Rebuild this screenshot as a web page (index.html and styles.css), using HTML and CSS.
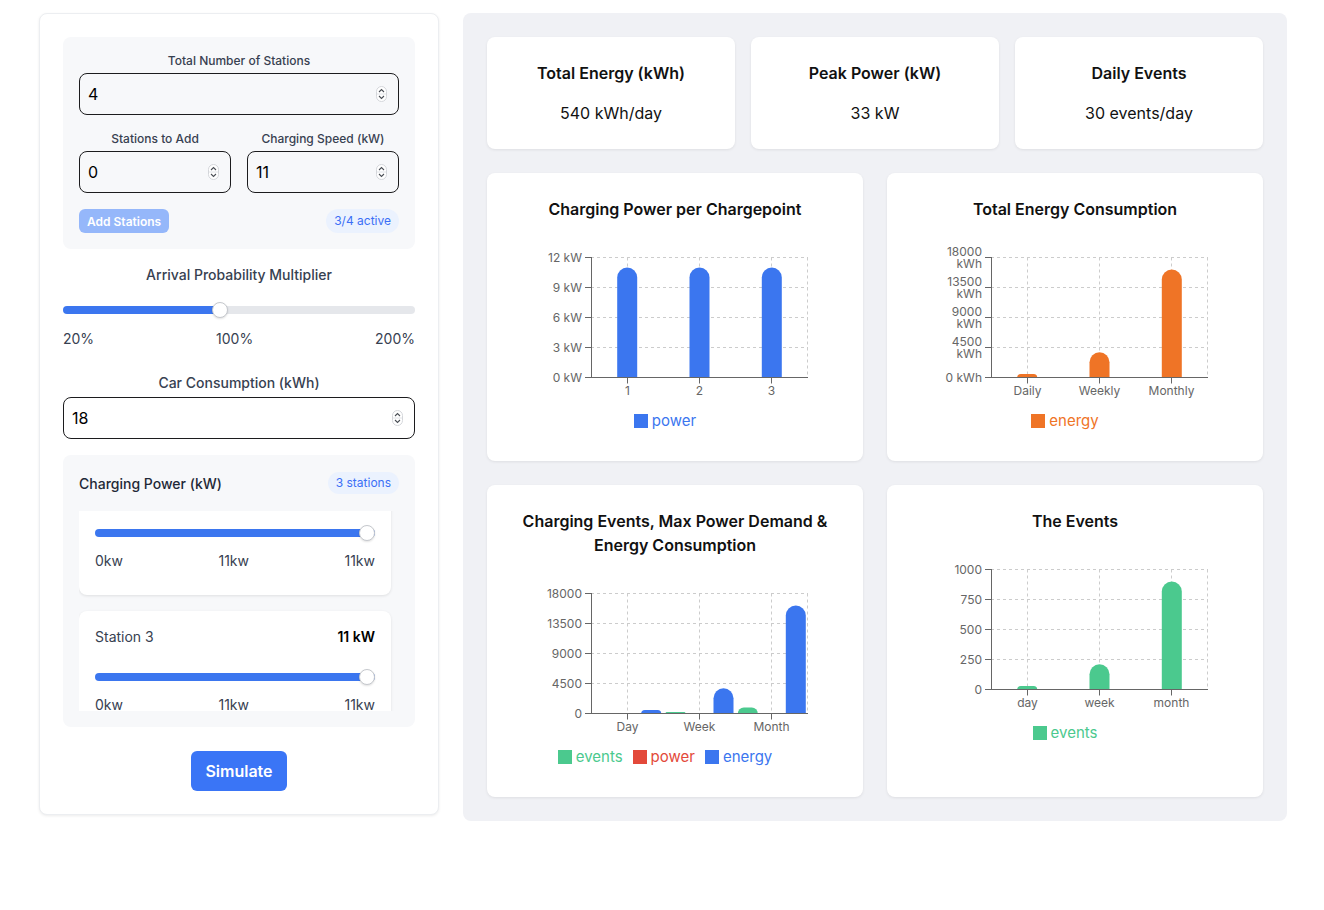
FILE: index.html
```html
<!DOCTYPE html>
<html lang="en">
<head>
<meta charset="utf-8">
<title>Charging Simulation</title>
<link rel="stylesheet" href="styles.css">
</head>
<body>
<div class="page">
  <aside class="controls">
    <section class="box">
      <div class="field">
        <label class="lbl-sm" for="total">Total Number of Stations</label>
        <div class="num">
          <input id="total" type="number" value="4">
          <svg class="spin" viewBox="0 0 11 16" width="11" height="16"><rect x="0.5" y="0.5" width="10" height="15" rx="5" fill="#fff" stroke="#d4d6da"/><line x1="1" y1="8" x2="10" y2="8" stroke="#e2e4e8"/><polyline points="3,6 5.5,3.6 8,6" fill="none" stroke="#4b4f56" stroke-width="1.1"/><polyline points="3,10 5.5,12.4 8,10" fill="none" stroke="#4b4f56" stroke-width="1.1"/></svg>
        </div>
      </div>
      <div class="pair">
        <div class="field">
          <label class="lbl-sm" for="add">Stations to Add</label>
          <div class="num">
            <input id="add" type="number" value="0">
            <svg class="spin" viewBox="0 0 11 16" width="11" height="16"><rect x="0.5" y="0.5" width="10" height="15" rx="5" fill="#fff" stroke="#d4d6da"/><line x1="1" y1="8" x2="10" y2="8" stroke="#e2e4e8"/><polyline points="3,6 5.5,3.6 8,6" fill="none" stroke="#4b4f56" stroke-width="1.1"/><polyline points="3,10 5.5,12.4 8,10" fill="none" stroke="#4b4f56" stroke-width="1.1"/></svg>
          </div>
        </div>
        <div class="field">
          <label class="lbl-sm" for="speed">Charging Speed (kW)</label>
          <div class="num">
            <input id="speed" type="number" value="11">
            <svg class="spin" viewBox="0 0 11 16" width="11" height="16"><rect x="0.5" y="0.5" width="10" height="15" rx="5" fill="#fff" stroke="#d4d6da"/><line x1="1" y1="8" x2="10" y2="8" stroke="#e2e4e8"/><polyline points="3,6 5.5,3.6 8,6" fill="none" stroke="#4b4f56" stroke-width="1.1"/><polyline points="3,10 5.5,12.4 8,10" fill="none" stroke="#4b4f56" stroke-width="1.1"/></svg>
          </div>
        </div>
      </div>
      <div class="actions">
        <button class="btn-add" disabled>Add Stations</button>
        <span class="pill">3/4 active</span>
      </div>
    </section>

    <section class="arrival">
      <div class="lbl">Arrival Probability Multiplier</div>
      <input class="range" type="range" min="20" max="200" value="100" style="--pct:44.7%">
      <div class="scale"><span>20%</span><span>100%</span><span>200%</span></div>
    </section>

    <section class="car">
      <div class="lbl">Car Consumption (kWh)</div>
      <div class="num">
        <input type="number" value="18">
        <svg class="spin" viewBox="0 0 11 16" width="11" height="16"><rect x="0.5" y="0.5" width="10" height="15" rx="5" fill="#fff" stroke="#d4d6da"/><line x1="1" y1="8" x2="10" y2="8" stroke="#e2e4e8"/><polyline points="3,6 5.5,3.6 8,6" fill="none" stroke="#4b4f56" stroke-width="1.1"/><polyline points="3,10 5.5,12.4 8,10" fill="none" stroke="#4b4f56" stroke-width="1.1"/></svg>
      </div>
    </section>

    <section class="box power">
      <div class="power-head">
        <span class="power-title">Charging Power (kW)</span>
        <span class="pill pill-sm">3 stations</span>
      </div>
      <div class="stations" id="stationList">
        <div class="station">
          <div class="station-head"><span>Station 1</span><b>11 kW</b></div>
          <input class="range" type="range" min="0" max="11" value="11" style="--pct:100%">
          <div class="scale"><span>0kw</span><span>11kw</span><span>11kw</span></div>
        </div>
        <div class="station">
          <div class="station-head"><span>Station 2</span><b>11 kW</b></div>
          <input class="range" type="range" min="0" max="11" value="11" style="--pct:100%">
          <div class="scale"><span>0kw</span><span>11kw</span><span>11kw</span></div>
        </div>
        <div class="station">
          <div class="station-head"><span>Station 3</span><b>11 kW</b></div>
          <input class="range" type="range" min="0" max="11" value="11" style="--pct:100%">
          <div class="scale"><span>0kw</span><span>11kw</span><span>11kw</span></div>
        </div>
      </div>
    </section>

    <div class="sim-wrap"><button class="btn-sim">Simulate</button></div>
  </aside>

  <main class="dash">
    <div class="stats">
      <div class="stat"><h3>Total Energy (kWh)</h3><p>540 kWh/day</p></div>
      <div class="stat"><h3>Peak Power (kW)</h3><p>33 kW</p></div>
      <div class="stat"><h3>Daily Events</h3><p>30 events/day</p></div>
    </div>

    <div class="charts">
      <!-- Chart 1 -->
      <div class="chart">
        <h3>Charging Power per Chargepoint</h3>
        <svg viewBox="0 0 328 172" width="328" height="172">
          <g class="grid">
            <line x1="80" y1="24.5" x2="297" y2="24.5"/><line x1="80" y1="54.5" x2="297" y2="54.5"/><line x1="80" y1="84.5" x2="297" y2="84.5"/><line x1="80" y1="114.5" x2="297" y2="114.5"/>
            <line x1="116.5" y1="24.5" x2="116.5" y2="144.5"/><line x1="188.5" y1="24.5" x2="188.5" y2="144.5"/><line x1="260.5" y1="24.5" x2="260.5" y2="144.5"/><line x1="296.5" y1="24.5" x2="296.5" y2="144.5"/>
          </g>
          <g fill="#3b76ef">
            <path d="M106.2 144.5V44.5A10 10 0 0 1 126.2 44.5V144.5Z"/>
            <path d="M178.5 144.5V44.5A10 10 0 0 1 198.5 44.5V144.5Z"/>
            <path d="M250.8 144.5V44.5A10 10 0 0 1 270.8 44.5V144.5Z"/>
          </g>
          <g class="axis">
            <line x1="80.5" y1="24" x2="80.5" y2="145"/><line x1="80" y1="144.5" x2="297" y2="144.5"/>
            <line x1="74" y1="24.5" x2="80" y2="24.5"/><line x1="74" y1="54.5" x2="80" y2="54.5"/><line x1="74" y1="84.5" x2="80" y2="84.5"/><line x1="74" y1="114.5" x2="80" y2="114.5"/><line x1="74" y1="144.5" x2="80" y2="144.5"/>
            <line x1="116.5" y1="144.5" x2="116.5" y2="150.5"/><line x1="188.5" y1="144.5" x2="188.5" y2="150.5"/><line x1="260.5" y1="144.5" x2="260.5" y2="150.5"/>
          </g>
          <g class="yt">
            <text x="71" y="28.5">12 kW</text><text x="71" y="58.5">9 kW</text><text x="71" y="88.5">6 kW</text><text x="71" y="118.5">3 kW</text><text x="71" y="148.5">0 kW</text>
          </g>
          <g class="xt">
            <text x="116.5" y="162">1</text><text x="188.5" y="162">2</text><text x="260.5" y="162">3</text>
          </g>
        </svg>
        <div class="legend"><span class="c-blue"><i></i>power</span></div>
      </div>

      <!-- Chart 2 -->
      <div class="chart">
        <h3>Total Energy Consumption</h3>
        <svg viewBox="0 0 328 172" width="328" height="172">
          <g class="grid">
            <line x1="80" y1="24.5" x2="297" y2="24.5"/><line x1="80" y1="54.5" x2="297" y2="54.5"/><line x1="80" y1="84.5" x2="297" y2="84.5"/><line x1="80" y1="114.5" x2="297" y2="114.5"/>
            <line x1="116.5" y1="24.5" x2="116.5" y2="144.5"/><line x1="188.5" y1="24.5" x2="188.5" y2="144.5"/><line x1="260.5" y1="24.5" x2="260.5" y2="144.5"/><line x1="296.5" y1="24.5" x2="296.5" y2="144.5"/>
          </g>
          <g fill="#ef7426">
            <path d="M106.2 144.5A3.6 3.6 0 0 1 109.8 140.9H122.6A3.6 3.6 0 0 1 126.2 144.5Z"/>
            <path d="M178.5 144.5V129.3A10 10 0 0 1 198.5 129.3V144.5Z"/>
            <path d="M250.8 144.5V46.5A10 10 0 0 1 270.8 46.5V144.5Z"/>
          </g>
          <g class="axis">
            <line x1="80.5" y1="24" x2="80.5" y2="145"/><line x1="80" y1="144.5" x2="297" y2="144.5"/>
            <line x1="74" y1="24.5" x2="80" y2="24.5"/><line x1="74" y1="54.5" x2="80" y2="54.5"/><line x1="74" y1="84.5" x2="80" y2="84.5"/><line x1="74" y1="114.5" x2="80" y2="114.5"/><line x1="74" y1="144.5" x2="80" y2="144.5"/>
            <line x1="116.5" y1="144.5" x2="116.5" y2="150.5"/><line x1="188.5" y1="144.5" x2="188.5" y2="150.5"/><line x1="260.5" y1="144.5" x2="260.5" y2="150.5"/>
          </g>
          <g class="yt">
            <text x="71" y="22.5">18000</text><text x="71" y="34.5">kWh</text>
            <text x="71" y="52.5">13500</text><text x="71" y="64.5">kWh</text>
            <text x="71" y="82.5">9000</text><text x="71" y="94.5">kWh</text>
            <text x="71" y="112.5">4500</text><text x="71" y="124.5">kWh</text>
            <text x="71" y="148.5">0 kWh</text>
          </g>
          <g class="xt">
            <text x="116.5" y="162">Daily</text><text x="188.5" y="162">Weekly</text><text x="260.5" y="162">Monthly</text>
          </g>
        </svg>
        <div class="legend"><span class="c-orange"><i></i>energy</span></div>
      </div>

      <!-- Chart 3 -->
      <div class="chart">
        <h3>Charging Events, Max Power Demand &amp; Energy Consumption</h3>
        <svg viewBox="0 0 328 172" width="328" height="172">
          <g class="grid">
            <line x1="80" y1="24.5" x2="297" y2="24.5"/><line x1="80" y1="54.5" x2="297" y2="54.5"/><line x1="80" y1="84.5" x2="297" y2="84.5"/><line x1="80" y1="114.5" x2="297" y2="114.5"/>
            <line x1="116.5" y1="24.5" x2="116.5" y2="144.5"/><line x1="188.5" y1="24.5" x2="188.5" y2="144.5"/><line x1="260.5" y1="24.5" x2="260.5" y2="144.5"/><line x1="296.5" y1="24.5" x2="296.5" y2="144.5"/>
          </g>
          <g fill="#4bc98e">
            <rect x="82.2" y="144.2" width="20" height="0.3"/>
            <path d="M154.5 144.5V144.5A1.4 1.4 0 0 1 155.9 143.1H173.1A1.4 1.4 0 0 1 174.5 144.5Z"/>
            <path d="M226.8 144.5A6 6 0 0 1 232.8 138.5H240.8A6 6 0 0 1 246.8 144.5Z"/>
          </g>
          <g fill="#e3493a">
            <rect x="106.2" y="144.2" width="20" height="0.3"/>
            <rect x="178.5" y="144.2" width="20" height="0.3"/>
            <rect x="250.8" y="144.2" width="20" height="0.3"/>
          </g>
          <g fill="#3b76ef">
            <path d="M130.2 144.5A3.6 3.6 0 0 1 133.8 140.9H146.6A3.6 3.6 0 0 1 150.2 144.5Z"/>
            <path d="M202.5 144.5V129.3A10 10 0 0 1 222.5 129.3V144.5Z"/>
            <path d="M274.8 144.5V46.5A10 10 0 0 1 294.8 46.5V144.5Z"/>
          </g>
          <g class="axis">
            <line x1="80.5" y1="24" x2="80.5" y2="145"/><line x1="80" y1="144.5" x2="297" y2="144.5"/>
            <line x1="74" y1="24.5" x2="80" y2="24.5"/><line x1="74" y1="54.5" x2="80" y2="54.5"/><line x1="74" y1="84.5" x2="80" y2="84.5"/><line x1="74" y1="114.5" x2="80" y2="114.5"/><line x1="74" y1="144.5" x2="80" y2="144.5"/>
            <line x1="116.5" y1="144.5" x2="116.5" y2="150.5"/><line x1="188.5" y1="144.5" x2="188.5" y2="150.5"/><line x1="260.5" y1="144.5" x2="260.5" y2="150.5"/>
          </g>
          <g class="yt">
            <text x="71" y="28.5">18000</text><text x="71" y="58.5">13500</text><text x="71" y="88.5">9000</text><text x="71" y="118.5">4500</text><text x="71" y="148.5">0</text>
          </g>
          <g class="xt">
            <text x="116.5" y="162">Day</text><text x="188.5" y="162">Week</text><text x="260.5" y="162">Month</text>
          </g>
        </svg>
        <div class="legend"><span class="c-green"><i></i>events</span><span class="c-red"><i></i>power</span><span class="c-blue"><i></i>energy</span></div>
      </div>

      <!-- Chart 4 -->
      <div class="chart">
        <h3>The Events</h3>
        <svg viewBox="0 0 328 172" width="328" height="172">
          <g class="grid">
            <line x1="80" y1="24.5" x2="297" y2="24.5"/><line x1="80" y1="54.5" x2="297" y2="54.5"/><line x1="80" y1="84.5" x2="297" y2="84.5"/><line x1="80" y1="114.5" x2="297" y2="114.5"/>
            <line x1="116.5" y1="24.5" x2="116.5" y2="144.5"/><line x1="188.5" y1="24.5" x2="188.5" y2="144.5"/><line x1="260.5" y1="24.5" x2="260.5" y2="144.5"/><line x1="296.5" y1="24.5" x2="296.5" y2="144.5"/>
          </g>
          <g fill="#4bc98e">
            <path d="M106.2 144.5A3.6 3.6 0 0 1 109.8 140.9H122.6A3.6 3.6 0 0 1 126.2 144.5Z"/>
            <path d="M178.5 144.5V129.3A10 10 0 0 1 198.5 129.3V144.5Z"/>
            <path d="M250.8 144.5V46.5A10 10 0 0 1 270.8 46.5V144.5Z"/>
          </g>
          <g class="axis">
            <line x1="80.5" y1="24" x2="80.5" y2="145"/><line x1="80" y1="144.5" x2="297" y2="144.5"/>
            <line x1="74" y1="24.5" x2="80" y2="24.5"/><line x1="74" y1="54.5" x2="80" y2="54.5"/><line x1="74" y1="84.5" x2="80" y2="84.5"/><line x1="74" y1="114.5" x2="80" y2="114.5"/><line x1="74" y1="144.5" x2="80" y2="144.5"/>
            <line x1="116.5" y1="144.5" x2="116.5" y2="150.5"/><line x1="188.5" y1="144.5" x2="188.5" y2="150.5"/><line x1="260.5" y1="144.5" x2="260.5" y2="150.5"/>
          </g>
          <g class="yt">
            <text x="71" y="28.5">1000</text><text x="71" y="58.5">750</text><text x="71" y="88.5">500</text><text x="71" y="118.5">250</text><text x="71" y="148.5">0</text>
          </g>
          <g class="xt">
            <text x="116.5" y="162">day</text><text x="188.5" y="162">week</text><text x="260.5" y="162">month</text>
          </g>
        </svg>
        <div class="legend"><span class="c-green"><i></i>events</span></div>
      </div>
    </div>
  </main>
</div>
<script src="app.js"></script>
</body>
</html>
```

FILE: styles.css
```css
* { box-sizing: border-box; }

body {
  margin: 0;
  font-family: Inter, "Noto Sans", "Liberation Sans", sans-serif;
  color: #111;
  background: #fff;
}

.page {
  display: flex;
  align-items: flex-start;
  gap: 24px;
  padding: 13px 0 0 39px;
}

/* ---------- Left control panel ---------- */
.controls {
  width: 400px;
  flex: none;
  padding: 23px;
  background: #fff;
  border: 1px solid #eceef1;
  border-radius: 8px;
  box-shadow: 0 1px 3px rgba(0, 0, 0, 0.08);
}

.box {
  background: #f7f8fa;
  border-radius: 8px;
  padding: 16px;
  display: flex;
  flex-direction: column;
  gap: 16px;
}

.field {
  display: flex;
  flex-direction: column;
  gap: 4px;
  min-width: 0;
}

.lbl-sm {
  font-size: 12px;
  line-height: 16px;
  font-weight: 500;
  color: #374151;
  text-align: center;
}

.lbl {
  font-size: 14px;
  line-height: 20px;
  font-weight: 500;
  color: #374151;
  text-align: center;
}

.num {
  display: flex;
  align-items: center;
  height: 42px;
  min-width: 0;
  border: 1px solid #1c1c1e;
  border-radius: 8px;
  padding: 0 11px 0 8px;
}

.num input {
  flex: 1 1 0;
  width: 0;
  min-width: 0;
  border: 0;
  padding: 0;
  background: transparent;
  font-family: Inter, "Noto Sans", sans-serif;
  font-size: 16px;
  color: #000;
  outline: none;
  -moz-appearance: textfield;
}

.num input::-webkit-inner-spin-button,
.num input::-webkit-outer-spin-button {
  -webkit-appearance: none;
  margin: 0;
}

.spin { flex: none; display: block; }

.pair {
  display: grid;
  grid-template-columns: minmax(0, 1fr) minmax(0, 1fr);
  gap: 16px;
}

.actions {
  display: flex;
  justify-content: space-between;
  align-items: center;
}

.btn-add {
  height: 24px;
  padding: 0 8px;
  border: 0;
  border-radius: 6px;
  background: #95b7fa;
  color: #fff;
  font-family: Inter, "Noto Sans", sans-serif;
  font-size: 12px;
  font-weight: 600;
}

.pill {
  font-size: 12px;
  line-height: 16px;
  padding: 4px 8px;
  border-radius: 999px;
  background: #ebf2fe;
  color: #3b6ff6;
}

.pill-sm { padding: 3px 8px; }

.arrival { margin-top: 16px; }

.range {
  display: block;
  width: 100%;
  height: 16px;
  margin: 17px 0 0;
  padding: 0;
  -webkit-appearance: none;
  appearance: none;
  background: transparent;
}

.range::-webkit-slider-runnable-track {
  height: 8px;
  border-radius: 4px;
  background: linear-gradient(to right, #3b76ef var(--pct), #e5e7eb var(--pct));
}

.range::-webkit-slider-thumb {
  -webkit-appearance: none;
  width: 16px;
  height: 16px;
  margin-top: -4px;
  border-radius: 50%;
  background: #fff;
  border: 1px solid #c5c8cd;
  box-shadow: 0 1px 2px rgba(0, 0, 0, 0.12);
}

.scale {
  display: flex;
  justify-content: space-between;
  margin-top: 11px;
  font-size: 14px;
  line-height: 20px;
  color: #374151;
}

.car { margin-top: 24px; }
.car .num { margin-top: 4px; }

.power { margin-top: 16px; }

.power-head {
  display: flex;
  justify-content: space-between;
  align-items: center;
  height: 24px;
}

.power-title {
  font-size: 14px;
  font-weight: 500;
  color: #1f2937;
}

.stations {
  height: 200px;
  overflow-y: auto;
  padding-right: 8px;
  display: flex;
  flex-direction: column;
  gap: 16px;
  scrollbar-width: none;
}

.stations::-webkit-scrollbar { width: 0; height: 0; }

.station {
  flex-shrink: 0;
  background: #fff;
  border-radius: 8px;
  box-shadow: 0 1px 3px rgba(0, 0, 0, 0.1);
  padding: 16px 16px 24px;
}

.station-head {
  display: flex;
  justify-content: space-between;
  font-size: 14px;
  line-height: 20px;
  color: #374151;
}

.station-head b { color: #000; font-weight: 600; }

.station .range { margin-top: 22px; }
.station .scale { margin-top: 10px; }

.sim-wrap {
  display: flex;
  justify-content: center;
  margin-top: 24px;
}

.btn-sim {
  width: 96px;
  height: 40px;
  border: 0;
  border-radius: 6px;
  background: #3a75f6;
  color: #fff;
  font-family: Inter, "Noto Sans", sans-serif;
  font-size: 16px;
  font-weight: 600;
}

/* ---------- Dashboard ---------- */
.dash {
  width: 824px;
  flex: none;
  padding: 24px;
  background: #f0f1f5;
  border-radius: 8px;
}

.stats {
  display: grid;
  grid-template-columns: repeat(3, 1fr);
  gap: 16px;
}

.stat {
  background: #fff;
  border-radius: 8px;
  box-shadow: 0 1px 3px rgba(0, 0, 0, 0.08);
  padding: 24px;
  text-align: center;
  display: flex;
  flex-direction: column;
  gap: 16px;
}

.stat h3 {
  margin: 0;
  font-size: 16px;
  line-height: 24px;
  font-weight: 600;
}

.stat p {
  margin: 0;
  font-size: 16px;
  line-height: 24px;
}

.charts {
  display: grid;
  grid-template-columns: 1fr 1fr;
  gap: 24px;
  margin-top: 24px;
}

.chart {
  background: #fff;
  border-radius: 8px;
  box-shadow: 0 1px 3px rgba(0, 0, 0, 0.08);
  padding: 24px 24px 30px;
}

.chart h3 {
  margin: 0;
  text-align: center;
  font-size: 16px;
  line-height: 24px;
  font-weight: 600;
}

.chart svg {
  display: block;
  margin-top: 12px;
}

.grid line {
  stroke: #ccc;
  stroke-dasharray: 3 3;
}

.axis line { stroke: #666; }

.yt text, .xt text {
  font-family: Inter, "Noto Sans", sans-serif;
  font-size: 12px;
  fill: #666;
}

.yt text { text-anchor: end; }
.xt text { text-anchor: middle; }

.legend {
  display: flex;
  justify-content: center;
  gap: 10px;
  height: 20px;
  margin-top: 6px;
  padding-right: 20px;
  font-size: 15px;
  line-height: 20px;
}

.legend span {
  display: flex;
  align-items: center;
  gap: 4px;
}

.legend i {
  display: block;
  width: 14px;
  height: 14px;
  background: currentColor;
}

.c-blue { color: #3b76ef; }
.c-orange { color: #ef7426; }
.c-green { color: #4bc98e; }
.c-red { color: #e3493a; }
```

FILE: app.js
```js
document.getElementById('stationList').scrollTop = 188;
```
